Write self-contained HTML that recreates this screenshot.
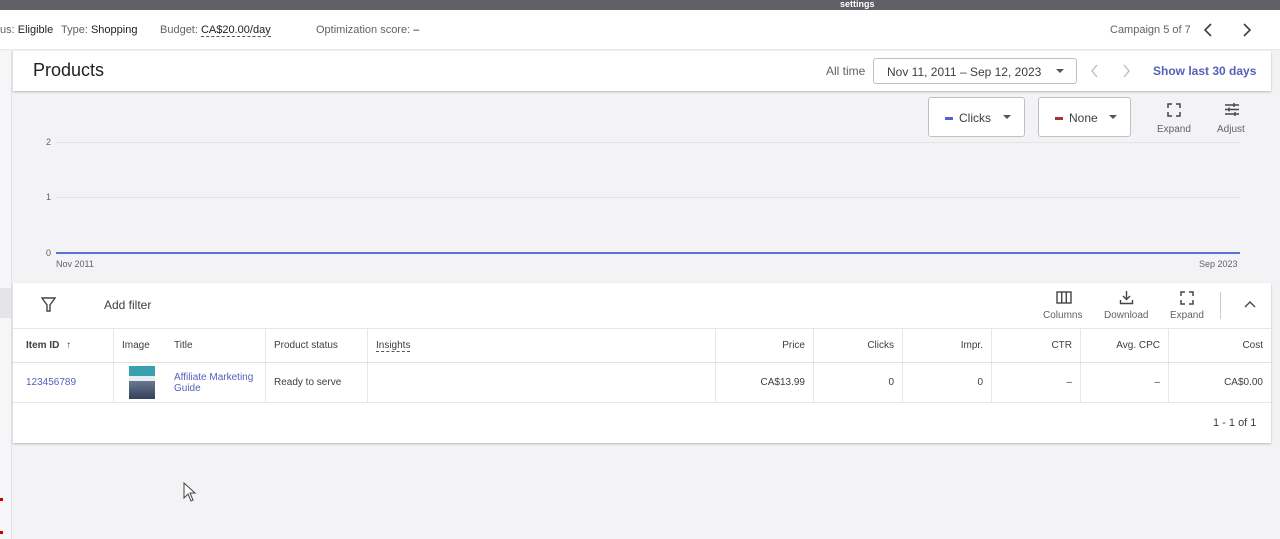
<!DOCTYPE html>
<html><head><meta charset="utf-8"><style>
*{box-sizing:border-box;margin:0;padding:0}
body{width:1280px;height:539px;overflow:hidden;background:#f3f3f6;font-family:"Liberation Sans",Arial,sans-serif;color:#3c4043;position:relative;font-size:11px}
.abs{position:absolute}
.top{left:0;top:0;width:1280px;height:10px;background:#5f6066;color:#fff;font-size:9px;font-weight:bold}
.hdr{left:0;top:10px;width:1280px;height:40px;background:#fff;border-bottom:1px solid #e8e8ea}
.card{left:13px;width:1258px;background:#fff;box-shadow:0 1px 2px rgba(0,0,0,.25)}
.lt{color:#5f6368}
.btn{border:1px solid #bdc1c6;border-radius:3px;background:#fff;font-size:12px;color:#3c4043}
.th{top:328px;height:34px;border-right:1px solid #e6e6e6;font-size:10px;font-weight:bold;color:#3c4043;padding:12px 8px}
.td{top:363px;height:39px;border-right:1px solid #e6e6e6;font-size:10px;color:#3c4043;padding:14px 8px}
.r{text-align:right}
.blue{color:#5561b8}
.grid{left:56px;width:1184px;height:1px;background:#e4e4e6}
.ax{font-size:9px;color:#5f6368}
.tri{position:absolute;width:0;height:0;border-left:4px solid transparent;border-right:4px solid transparent;border-top:4px solid #555}
</style></head><body>
<div class="abs top"><span class="abs" style="left:840px;top:-1px">settings</span></div>
<div class="abs hdr">
<span class="abs lt" style="left:0;top:14px">us: <b style="color:#202124;font-weight:normal">Eligible</b></span>
<span class="abs lt" style="left:61px;top:14px">Type: <span style="color:#202124">Shopping</span></span>
<span class="abs lt" style="left:160px;top:14px">Budget: <span style="color:#202124;border-bottom:1px dashed #555">CA$20.00/day</span></span>
<span class="abs lt" style="left:316px;top:14px">Optimization score: <span style="color:#202124">–</span></span>
<span class="abs lt" style="left:1110px;top:14px">Campaign 5 of 7</span>
<svg class="abs" style="left:1201px;top:12px" width="14" height="16"><path d="M10 2 L4 8 L10 14" stroke="#3c4043" stroke-width="1.6" fill="none"/></svg>
<svg class="abs" style="left:1240px;top:12px" width="14" height="16"><path d="M4 2 L10 8 L4 14" stroke="#3c4043" stroke-width="1.6" fill="none"/></svg>
</div>
<div class="abs" style="left:0;top:51px;width:12px;height:488px;background:#f6f6f8;border-right:1px solid #e3e3e6"></div>
<div class="abs" style="left:0;top:288px;width:12px;height:30px;background:#e4e4e8"></div>
<div class="abs card" style="top:51px;height:40px">
<span class="abs" style="left:20px;top:9px;font-size:18px;color:#202124">Products</span>
<span class="abs lt" style="left:813px;top:13px;font-size:12px">All time</span>
<div class="abs btn" style="left:860px;top:7px;width:204px;height:26px;padding:6px 13px">Nov 11, 2011 – Sep 12, 2023<span class="tri" style="right:12px;top:10px"></span></div>
<svg class="abs" style="left:1076px;top:12px" width="12" height="16"><path d="M8 2 L3 8 L8 14" stroke="#bbb" stroke-width="1.3" fill="none"/></svg>
<svg class="abs" style="left:1108px;top:12px" width="12" height="16"><path d="M3 2 L8 8 L3 14" stroke="#bbb" stroke-width="1.3" fill="none"/></svg>
<span class="abs" style="left:1140px;top:13px;font-size:12px;color:#5561b8;font-weight:bold">Show last 30 days</span>
</div>
<div class="abs btn" style="left:928px;top:97px;width:97px;height:40px;padding:13px 16px"><span style="display:inline-block;width:8px;height:3px;background:#5561d0;vertical-align:middle;margin-right:6px"></span>Clicks<span class="tri" style="right:13px;top:17px"></span></div>
<div class="abs btn" style="left:1038px;top:97px;width:93px;height:40px;padding:13px 16px"><span style="display:inline-block;width:8px;height:3px;background:#b03030;vertical-align:middle;margin-right:6px"></span>None<span class="tri" style="right:13px;top:17px"></span></div>
<svg class="abs" style="left:1167px;top:103px" width="14" height="14"><path d="M1 5V1H5M9 1H13V5M13 9V13H9M5 13H1V9" stroke="#444" stroke-width="1.5" fill="none"/></svg>
<span class="abs lt" style="left:1157px;top:124px;font-size:10px">Expand</span>
<svg class="abs" style="left:1224px;top:102px" width="16" height="15"><path d="M1 3H15M1 7.5H15M1 12H15M10 1V5M5 5.5V9.5M11 10V14" stroke="#444" stroke-width="1.4" fill="none"/></svg>
<span class="abs lt" style="left:1217px;top:124px;font-size:10px">Adjust</span>
<div class="abs grid" style="top:142px"></div><span class="abs ax" style="left:46px;top:137px">2</span>
<div class="abs grid" style="top:197px"></div><span class="abs ax" style="left:46px;top:192px">1</span>
<span class="abs ax" style="left:46px;top:248px">0</span>
<div class="abs" style="left:56px;top:252px;width:1184px;height:2px;background:#5b6fd6"></div>
<span class="abs ax" style="left:56px;top:259px">Nov 2011</span>
<span class="abs ax" style="left:1199px;top:259px">Sep 2023</span>
<div class="abs card" style="top:283px;height:160px"></div>
<svg class="abs" style="left:41px;top:297px" width="15" height="15"><path d="M1 1H14L9 8V14H6V8Z" stroke="#444" stroke-width="1.4" fill="none"/></svg>
<span class="abs" style="left:104px;top:298px;font-size:12px;color:#3c4043">Add filter</span>
<svg class="abs" style="left:1056px;top:291px" width="16" height="13"><rect x="1" y="1" width="14" height="11" stroke="#444" stroke-width="1.4" fill="none"/><path d="M5.7 1V12M10.3 1V12" stroke="#444" stroke-width="1.4"/></svg>
<span class="abs lt" style="left:1043px;top:310px;font-size:10px">Columns</span>
<svg class="abs" style="left:1119px;top:290px" width="15" height="15"><path d="M7.5 1V9M4 6L7.5 9.5 11 6M1.5 10V13.5H13.5V10" stroke="#444" stroke-width="1.4" fill="none"/></svg>
<span class="abs lt" style="left:1104px;top:310px;font-size:10px">Download</span>
<svg class="abs" style="left:1180px;top:291px" width="14" height="14"><path d="M1 5V1H5M9 1H13V5M13 9V13H9M5 13H1V9" stroke="#444" stroke-width="1.5" fill="none"/></svg>
<span class="abs lt" style="left:1170px;top:310px;font-size:10px">Expand</span>
<div class="abs" style="left:1220px;top:292px;width:1px;height:27px;background:#ccc"></div>
<svg class="abs" style="left:1244px;top:300px" width="12" height="8"><path d="M1 7L6 2 11 7" stroke="#444" stroke-width="1.4" fill="none"/></svg>
<div class="abs" style="left:13px;top:328px;width:1258px;height:1px;background:#e6e6e6"></div>
<div class="abs" style="left:13px;top:362px;width:1258px;height:1px;background:#e0e0e0"></div>
<div class="abs" style="left:13px;top:402px;width:1258px;height:1px;background:#e6e6e6"></div>
<div class="abs th" style="left:13px;width:101px;padding-left:13px">Item ID <span style="font-weight:normal;margin-left:4px">↑</span></div>
<div class="abs th" style="left:114px;width:152px;font-weight:normal">Image<span class="abs" style="left:60px;top:12px">Title</span></div>
<div class="abs th" style="left:266px;width:102px;font-weight:normal">Product status</div>
<div class="abs th" style="left:368px;width:348px;font-weight:normal"><span style="border-bottom:1px dashed #555">Insights</span></div>
<div class="abs th r" style="left:716px;width:98px;font-weight:normal">Price</div>
<div class="abs th r" style="left:814px;width:89px;font-weight:normal">Clicks</div>
<div class="abs th r" style="left:903px;width:89px;font-weight:normal">Impr.</div>
<div class="abs th r" style="left:992px;width:89px;font-weight:normal">CTR</div>
<div class="abs th r" style="left:1081px;width:88px;font-weight:normal">Avg. CPC</div>
<div class="abs th r" style="left:1169px;width:102px;border-right:none;font-weight:normal">Cost</div>
<div class="abs td blue" style="left:13px;width:101px;padding-left:13px">123456789</div>
<div class="abs td" style="left:114px;width:152px"></div>
<div class="abs" style="left:129px;top:366px;width:26px;height:33px;background:linear-gradient(#3aa0b0 0,#3aa0b0 30%,#e8eef0 30%,#e8eef0 45%,#6a7890 45%,#34405a 100%)"></div>
<span class="abs blue" style="left:174px;top:372px;font-size:10px;line-height:11px">Affiliate Marketing<br>Guide</span>
<div class="abs td" style="left:266px;width:102px">Ready to serve</div>
<div class="abs td" style="left:368px;width:348px"></div>
<div class="abs td r" style="left:716px;width:98px">CA$13.99</div>
<div class="abs td r" style="left:814px;width:89px">0</div>
<div class="abs td r" style="left:903px;width:89px">0</div>
<div class="abs td r" style="left:992px;width:89px">–</div>
<div class="abs td r" style="left:1081px;width:88px">–</div>
<div class="abs td r" style="left:1169px;width:102px;border-right:none">CA$0.00</div>
<span class="abs" style="left:1213px;top:417px;font-size:11px;color:#3c4043">1 - 1 of 1</span>
<svg class="abs" style="left:183px;top:482px" width="14" height="20"><path d="M1 1V16L5 12 8 19 10 18 7 11H12Z" fill="#fff" stroke="#444" stroke-width="1"/></svg>
<div class="abs" style="left:0;top:498px;width:3px;height:3px;background:#c00"></div>
<div class="abs" style="left:0;top:531px;width:3px;height:3px;background:#c00"></div>
</body></html>
